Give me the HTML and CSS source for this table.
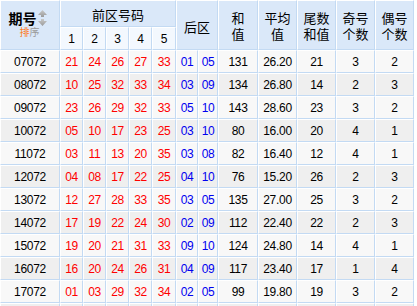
FILE: index.html
```html
<!DOCTYPE html>
<html lang="zh-CN">
<head>
<meta charset="utf-8">
<title>大乐透历史同期</title>
<link rel="stylesheet" href="styles.css">
</head>
<body>
<div class="grid">
  <div class="c hd span-r2 sortcell">
    <div class="sort-top"><b class="qh">期号</b><svg class="arrows" width="9" height="16" viewBox="0 0 9 16"><defs><linearGradient id="g" x1="0" y1="0" x2="0" y2="1"><stop offset="0" stop-color="#c8c8c8"/><stop offset="1" stop-color="#9a9a9a"/></linearGradient></defs><path d="M4.5 0 L9 5 L6 5 L6 7 L3 7 L3 5 L0 5 Z" fill="url(#g)"/><path d="M3 9 L6 9 L6 11 L9 11 L4.5 16 L0 11 L3 11 Z" fill="url(#g)"/></svg></div>
    <div class="sort-sub"><span class="pai">排</span><span class="xu">序</span></div>
  </div>
  <div class="c hd span-c5 h1">前区号码</div>
  <div class="c hd span-c2 span-r2 h1">后区</div>
  <div class="c hd span-r2 h2">和<br>值</div>
  <div class="c hd span-r2 h2">平均<br>值</div>
  <div class="c hd span-r2 h2">尾数<br>和值</div>
  <div class="c hd span-r2 h2">奇号<br>个数</div>
  <div class="c hd span-r2 h2">偶号<br>个数</div>
  <div class="c sub">1</div>
  <div class="c sub">2</div>
  <div class="c sub">3</div>
  <div class="c sub">4</div>
  <div class="c sub">5</div>

  <div class="row odd"><div class="c">07072</div><div class="c r">21</div><div class="c r">24</div><div class="c r">26</div><div class="c r">27</div><div class="c r">33</div><div class="c b">01</div><div class="c b">05</div><div class="c">131</div><div class="c">26.20</div><div class="c">21</div><div class="c">3</div><div class="c">2</div></div>
  <div class="row even"><div class="c">08072</div><div class="c r">10</div><div class="c r">25</div><div class="c r">32</div><div class="c r">33</div><div class="c r">34</div><div class="c b">03</div><div class="c b">09</div><div class="c">134</div><div class="c">26.80</div><div class="c">14</div><div class="c">2</div><div class="c">3</div></div>
  <div class="row odd"><div class="c">09072</div><div class="c r">23</div><div class="c r">26</div><div class="c r">29</div><div class="c r">32</div><div class="c r">33</div><div class="c b">05</div><div class="c b">10</div><div class="c">143</div><div class="c">28.60</div><div class="c">23</div><div class="c">3</div><div class="c">2</div></div>
  <div class="row even"><div class="c">10072</div><div class="c r">05</div><div class="c r">10</div><div class="c r">17</div><div class="c r">23</div><div class="c r">25</div><div class="c b">03</div><div class="c b">10</div><div class="c">80</div><div class="c">16.00</div><div class="c">20</div><div class="c">4</div><div class="c">1</div></div>
  <div class="row odd"><div class="c">11072</div><div class="c r">03</div><div class="c r">11</div><div class="c r">13</div><div class="c r">20</div><div class="c r">35</div><div class="c b">03</div><div class="c b">08</div><div class="c">82</div><div class="c">16.40</div><div class="c">12</div><div class="c">4</div><div class="c">1</div></div>
  <div class="row even"><div class="c">12072</div><div class="c r">04</div><div class="c r">08</div><div class="c r">17</div><div class="c r">22</div><div class="c r">25</div><div class="c b">04</div><div class="c b">10</div><div class="c">76</div><div class="c">15.20</div><div class="c">26</div><div class="c">2</div><div class="c">3</div></div>
  <div class="row odd"><div class="c">13072</div><div class="c r">12</div><div class="c r">27</div><div class="c r">28</div><div class="c r">33</div><div class="c r">35</div><div class="c b">03</div><div class="c b">05</div><div class="c">135</div><div class="c">27.00</div><div class="c">25</div><div class="c">3</div><div class="c">2</div></div>
  <div class="row even"><div class="c">14072</div><div class="c r">17</div><div class="c r">19</div><div class="c r">22</div><div class="c r">24</div><div class="c r">30</div><div class="c b">02</div><div class="c b">09</div><div class="c">112</div><div class="c">22.40</div><div class="c">22</div><div class="c">2</div><div class="c">3</div></div>
  <div class="row odd"><div class="c">15072</div><div class="c r">19</div><div class="c r">20</div><div class="c r">21</div><div class="c r">31</div><div class="c r">33</div><div class="c b">09</div><div class="c b">10</div><div class="c">124</div><div class="c">24.80</div><div class="c">14</div><div class="c">4</div><div class="c">1</div></div>
  <div class="row even"><div class="c">16072</div><div class="c r">16</div><div class="c r">20</div><div class="c r">24</div><div class="c r">26</div><div class="c r">31</div><div class="c b">04</div><div class="c b">09</div><div class="c">117</div><div class="c">23.40</div><div class="c">17</div><div class="c">1</div><div class="c">4</div></div>
  <div class="row odd"><div class="c">17072</div><div class="c r">01</div><div class="c r">03</div><div class="c r">29</div><div class="c r">32</div><div class="c r">34</div><div class="c b">02</div><div class="c b">05</div><div class="c">99</div><div class="c">19.80</div><div class="c">19</div><div class="c">3</div><div class="c">2</div></div>
  <div class="row even"><div class="c"></div><div class="c r"></div><div class="c r"></div><div class="c r"></div><div class="c r"></div><div class="c r"></div><div class="c b"></div><div class="c b"></div><div class="c"></div><div class="c"></div><div class="c"></div><div class="c"></div><div class="c"></div></div>
</div>
</body>
</html>
```

FILE: styles.css
```css
html, body {
  margin: 0;
  padding: 0;
  background: #ffffff;
  overflow: hidden;
}

.grid {
  display: grid;
  grid-template-columns: 60px 23px 23px 23px 23px 24px 22px 20px 40px 39px 39px 39px 39px;
  grid-template-rows: 27px 23px;
  grid-auto-rows: 23px;
  width: 414px;
  font-family: "Liberation Sans", "Noto Sans CJK SC", sans-serif;
  font-size: 12px;
  color: #000000;
}

.row {
  display: contents;
}

.c {
  box-sizing: border-box;
  display: flex;
  align-items: center;
  justify-content: center;
  text-align: center;
  border-top: 1px solid #ffffff;
  border-left: 1px solid #ffffff;
  border-right: 1px solid #c3daf3;
  border-bottom: 1px solid #c3daf3;
  letter-spacing: -0.3px;
  line-height: 14px;
}

.odd > .c {
  background: #f8f8f8;
}

.even > .c {
  background: #efefef;
}

.hd {
  background: #dae8f9;
  font-family: "Noto Sans CJK SC", sans-serif;
  font-size: 13px;
  letter-spacing: 0;
}

.h1 {
  padding-top: 3px;
}

.h2 {
  line-height: 16px;
  padding-top: 2px;
}

.sub {
  background: #f3f8fe;
  font-size: 12px;
}

.span-r2 {
  grid-row: span 2;
}

.span-c5 {
  grid-column: span 5;
}

.span-c2 {
  grid-column: span 2;
}

.r {
  color: #ff0000;
}

.b {
  color: #0000f0;
}

.sortcell {
  flex-direction: column;
  padding-bottom: 4px;
  padding-right: 5px;
}

.sort-top {
  display: flex;
  align-items: center;
  height: 16px;
}

.qh {
  font-size: 14px;
  font-weight: bold;
  line-height: 16px;
}

.arrows {
  display: block;
  margin-left: 1px;
}

.sort-sub {
  font-size: 10px;
  line-height: 10px;
  margin-top: 1px;
  margin-left: 4px;
}

.pai {
  color: #ff7a22;
}

.xu {
  color: #9a9a9a;
}
```
